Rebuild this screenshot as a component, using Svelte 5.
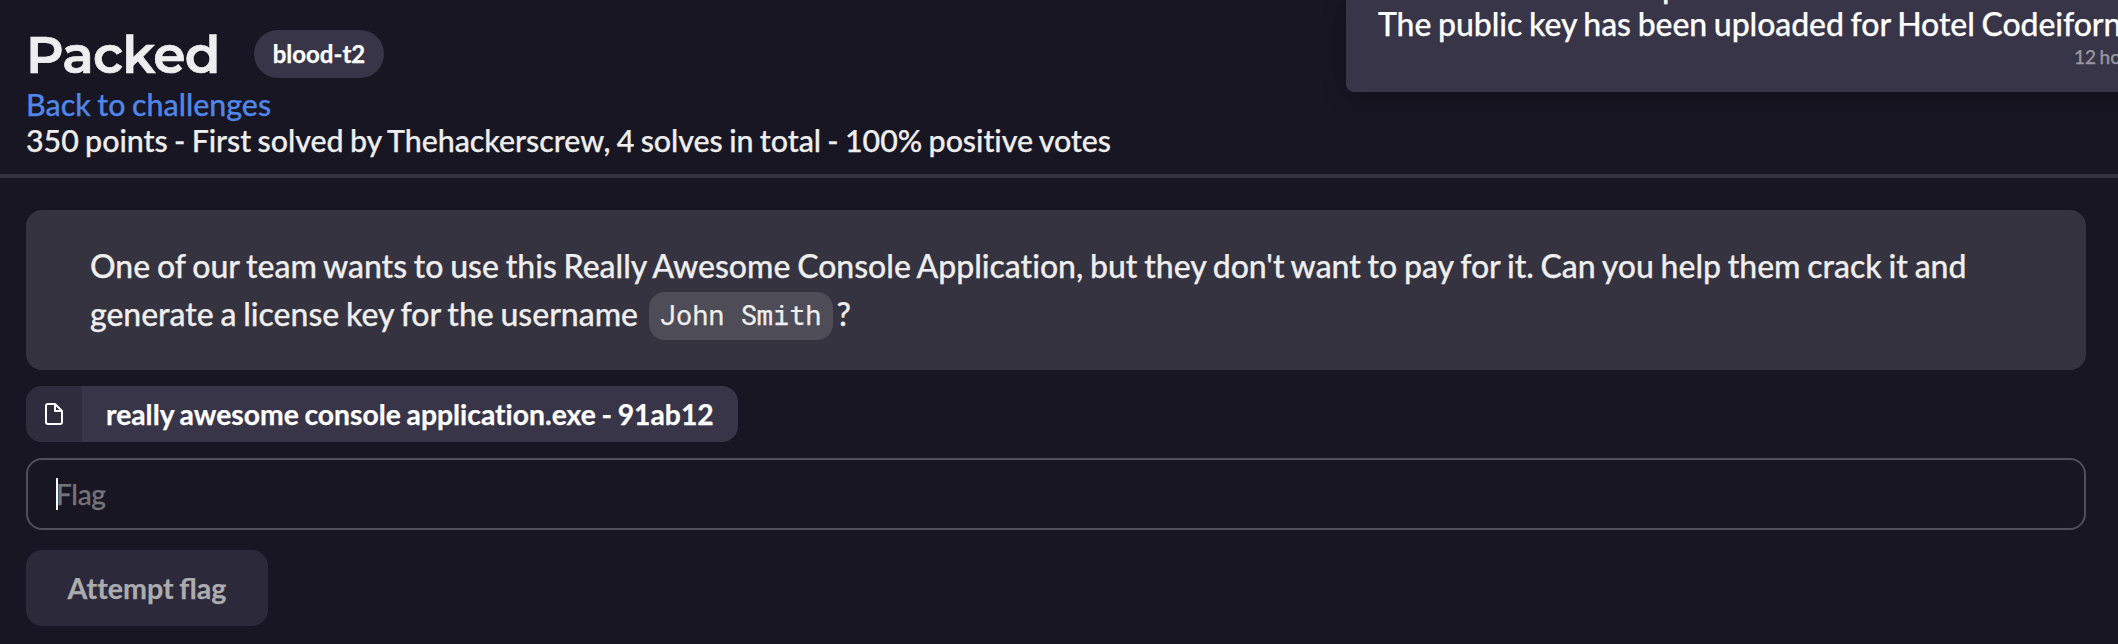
<script>
  const file = 'really awesome console application.exe - 91ab12';
</script>

<div class="page">
  <header>
    <div class="title"><h1>Packed</h1><span class="tag">blood-t2</span></div>
    <a href="#challenges">Back to challenges</a>
    <p>350 points - First solved by Thehackerscrew, 4 solves in total - 100% positive votes</p>
  </header>
  <main>
    <section>One of our team wants to use this Really Awesome Console Application, but they don't want to pay for it. Can you help them crack it and<br />generate a license key for the username <code>John Smith</code>?</section>
    <div class="file">
      <span class="icon"><svg viewBox="0 0 24 24" width="24" height="24" fill="none" stroke="#fff" stroke-width="2" stroke-linejoin="round"><path d="M13 2H6a2 2 0 0 0-2 2v16a2 2 0 0 0 2 2h12a2 2 0 0 0 2-2V9zM13 2v7h7" /></svg></span>
      <span class="name">{file}</span>
    </div>
    <div class="flag"><span class="caret"></span>Flag</div>
    <button>Attempt <span class="joined">flag</span></button>
  </main>
  <aside>
    <div class="prev">p</div>
    <div class="msg">The public key has been uploaded for Hotel Codeifornia</div>
    <time>12 hours ago</time>
  </aside>
</div>

<style>
  :global(body) { background: #181622; overflow: hidden; }
  .page { position: relative; width: 2118px; height: 644px; overflow: hidden; background: #181622; color: #eee; font: 500 30.4px/36px Lato, sans-serif; font-variant-ligatures: none; word-spacing: -1.25px; -webkit-text-stroke: .25px; }
  header { box-sizing: border-box; height: 178px; padding: 24px 26px 0; border-bottom: 4px solid #363340; }
  .title { display: flex; align-items: center; height: 60px; margin-bottom: 2px; }
  h1 { margin: 0; width: 228px; font: 600 52px/61px Montserrat, "Open Sans", sans-serif; letter-spacing: -.8px; -webkit-text-stroke: .7px; }
  .tag { box-sizing: border-box; width: 130px; text-align: center; height: 48px; border-radius: 24px; font: 700 24px/47px Lato, sans-serif; color: #fff; background: #383549; }
  a { display: block; color: #4f86e8; text-decoration: none; }
  p { margin: 0; letter-spacing: -.045px; }
  main { padding: 32px 32px 0 26px; }
  section { height: 160px; box-sizing: border-box; padding: 32px 64px; border-radius: 16px; background: #363340; font-size: 32px; line-height: 48px; letter-spacing: -.03px; white-space: nowrap; }
  code { display: inline-block; vertical-align: top; height: 48px; margin: 2px 4px 0; padding: 0 11px; border-radius: 16px; background: #4e4c57; font: 27px/46px "Roboto Mono", "Liberation Mono", monospace; word-spacing: 0; }
  .file { display: flex; width: 712px; height: 56px; margin-top: 16px; border-radius: 16px; overflow: hidden; background: #383549; color: #fff; font-weight: 700; line-height: 56px; }
  .icon { flex: none; display: grid; place-items: center; width: 56px; background: #2f2d3d; }
  .name { padding-left: 24px; font-size: 28.3px; white-space: nowrap; }
  .flag { display: flex; align-items: center; box-sizing: border-box; height: 72px; margin-top: 16px; padding-left: 28px; border: 2px solid #504e5a; border-radius: 16px; color: #74737a; font-size: 28px; letter-spacing: -.3px; }
  .caret { width: 2px; height: 32px; margin-right: -2px; background: #fff; }
  button { display: block; margin-top: 20px; padding: 0; width: 242px; height: 76px; border: 0; border-radius: 16px; background: #2b293a; color: #acacae; font: 700 28.6px Lato, sans-serif; font-variant-ligatures: none; word-spacing: -1.25px; }
  .joined { font-variant-ligatures: normal; }
  aside { position: absolute; left: 1346px; top: 0; width: 900px; height: 92px; background: #383549; color: #fff; border-radius: 0 0 8px 8px; box-shadow: 0 4px 24px rgba(0, 0, 0, .3); font-size: 32px; }
  .prev { height: 38px; margin: -33px 0 0 316px; line-height: 38px; }
  .msg { padding-left: 32px; line-height: 38px; white-space: nowrap; letter-spacing: -.08px; }
  time { position: absolute; left: 728px; top: 39px; font-size: 19px; color: #98969f; white-space: nowrap; }
</style>
